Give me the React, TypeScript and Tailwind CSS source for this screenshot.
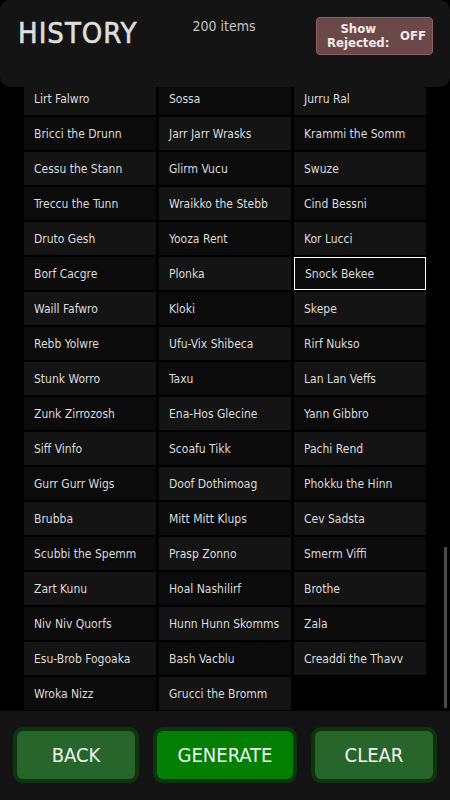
import { useLayoutEffect, useRef } from "react";

const visible = [
  "Lirt Falwro", "Sossa", "Jurru Ral",
  "Bricci the Drunn", "Jarr Jarr Wrasks", "Krammi the Somm",
  "Cessu the Stann", "Glirm Vucu", "Swuze",
  "Treccu the Tunn", "Wraikko the Stebb", "Cind Bessni",
  "Druto Gesh", "Yooza Rent", "Kor Lucci",
  "Borf Cacgre", "Plonka", "Snock Bekee",
  "Waill Fafwro", "Kloki", "Skepe",
  "Rebb Yolwre", "Ufu-Vix Shibeca", "Rirf Nukso",
  "Stunk Worro", "Taxu", "Lan Lan Veffs",
  "Zunk Zirrozosh", "Ena-Hos Glecine", "Yann Gibbro",
  "Siff Vinfo", "Scoafu Tikk", "Pachi Rend",
  "Gurr Gurr Wigs", "Doof Dothimoag", "Phokku the Hinn",
  "Brubba", "Mitt Mitt Klups", "Cev Sadsta",
  "Scubbi the Spemm", "Prasp Zonno", "Smerm Viffi",
  "Zart Kunu", "Hoal Nashilirf", "Brothe",
  "Niv Niv Quorfs", "Hunn Hunn Skomms", "Zala",
  "Esu-Brob Fogoaka", "Bash Vacblu", "Creaddi the Thavv",
  "Wroka Nizz", "Grucci the Bromm",
];

// older entries, scrolled out of view
const first = ["Bo", "Ska", "Vru", "Tem", "Gli", "Nar", "Pof", "Zel", "Kru", "Dab", "Hoo"];
const last = ["bba", "nn", "zek", "lu", "ffo", "rra", "mmo", "sk", "vi"];
const older = Array.from({ length: 200 - visible.length }, (_, i) => first[i % first.length] + last[(i * 7) % last.length]);
const items = [...older, ...visible];

const SELECTED = "Snock Bekee";

export default function App() {
  const listRef = useRef<HTMLDivElement>(null);

  useLayoutEffect(() => {
    const el = listRef.current;
    if (el) el.scrollTop = el.scrollHeight;
  }, []);

  return (
    <div className="flex h-[800px] w-[450px] flex-col bg-black font-['DejaVu_Sans_Condensed','DejaVu_Sans',sans-serif]">
      <header className="flex h-[87px] shrink-0 items-start rounded-[10px] bg-[#141414] pl-[18px] pr-[17px]">
        <h1 className="mt-[19px] w-[130px] text-[29px] leading-none tracking-[1px] text-[#dedede] [-webkit-text-stroke:0.6px_#dedede]">HISTORY</h1>
        <div className="mt-[16px] flex-1 pr-[16px] text-center text-[14px] text-[#c4c4c4]">200 items</div>
        <button className="mt-[17px] flex h-[38px] w-[117px] items-center justify-between rounded-[4px] border border-[#8f5f5f] bg-[#6b4949] pl-[10px] pr-[6px] text-[13px] font-bold leading-[14px] text-[#f2eaea]">
          <span className="text-center">Show<br />Rejected:</span>
          <span>OFF</span>
        </button>
      </header>

      <div className="relative min-h-0 flex-1">
        <div
          ref={listRef}
          className="h-full overflow-y-auto [scrollbar-width:none] [&::-webkit-scrollbar]:hidden"
        >
          <div className="grid grid-cols-3 gap-x-[3px] gap-y-[2px] pb-px pl-6 pr-6">
            {items.map((name, i) => (
              <div
                key={i}
                className={
                  "flex h-[33px] items-center truncate px-[10px] text-[12px] text-[#dcdcdc] " +
                  (name === SELECTED ? "border border-white bg-[#0b0b0b] " : i % 2 ? "bg-[#141414] " : "bg-[#0b0b0b] ")
                }
              >
                {name}
              </div>
            ))}
          </div>
        </div>
        {/* scroll thumb, list sits at its bottom */}
        <div className="absolute bottom-[3px] right-[3px] h-[161px] w-[3px] bg-[#4b4b4b]" />
      </div>

      <footer className="flex h-[89px] shrink-0 items-start gap-[14px] bg-[#141414] px-[13px] pt-[16px]">
        {[
          { label: "BACK", w: "w-[126px]", bg: "bg-[#27652a]" },
          { label: "GENERATE", w: "w-[144px]", bg: "bg-[#038003]" },
          { label: "CLEAR", w: "w-[126px]", bg: "bg-[#27652a]" },
        ].map((b) => (
          <button key={b.label} className={b.w + " h-[56px] rounded-[10px] bg-[#0c3510] p-[4px]"}>
            <div className={b.bg + " flex h-full items-center justify-center rounded-[6px] text-[20px] text-[#eef4ee]"}>
              {b.label}
            </div>
          </button>
        ))}
      </footer>
    </div>
  );
}
